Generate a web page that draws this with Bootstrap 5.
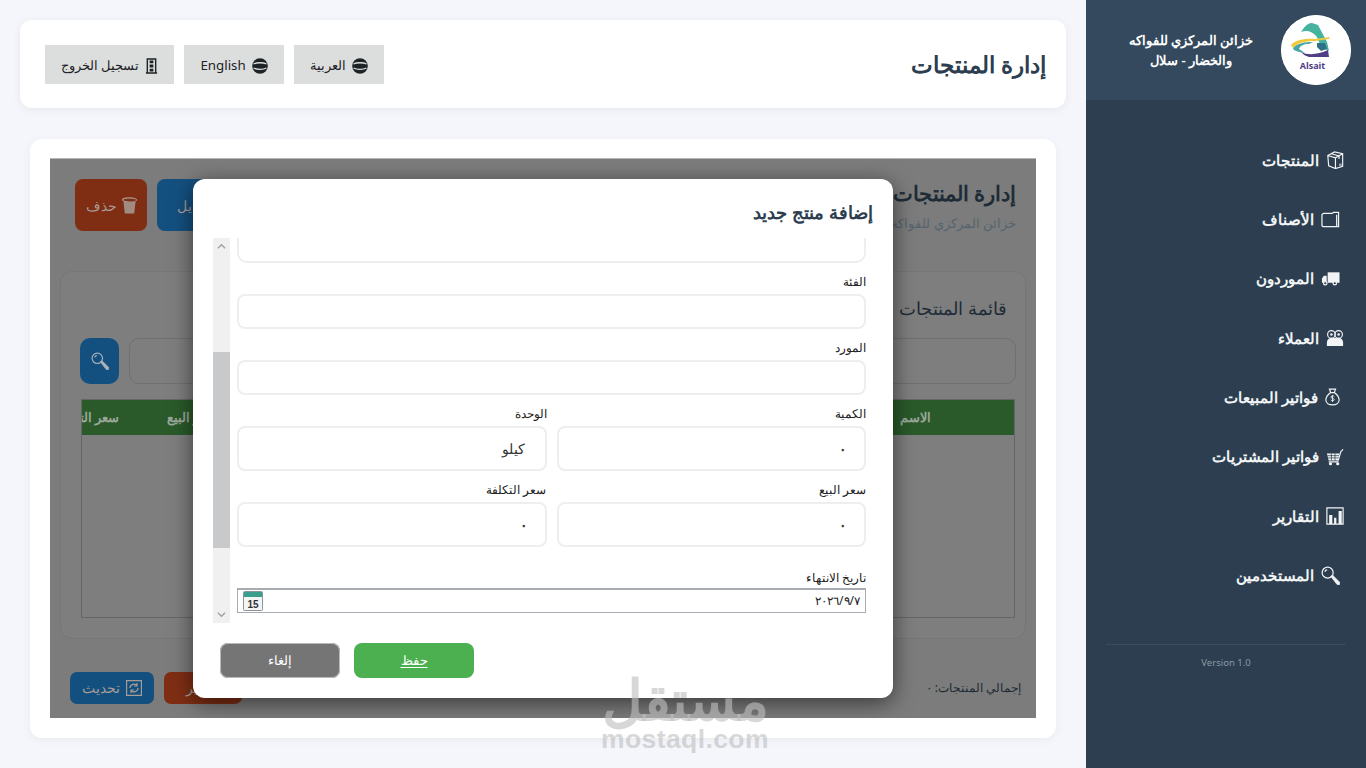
<!DOCTYPE html>
<html lang="ar" dir="rtl">
<head>
<meta charset="utf-8">
<title>إدارة المنتجات</title>
<link href="https://cdn.jsdelivr.net/npm/bootstrap@5.3.0/dist/css/bootstrap.min.css" rel="stylesheet">
<style>
html,body{height:768px;overflow:hidden}
body{font-family:"Noto Sans","Open Sans","Noto Sans CJK SC",sans-serif;background:#f4f6fb;color:#2c3e50;width:1366px}
.ic{display:block;flex:none;fill:none;stroke:currentColor;stroke-width:1.3}
.side{width:280px;height:768px;background:#2c3e50;color:#fff;flex:none}
.side-head{height:100px;background:#34495e;padding:0 15px;gap:15px}
.logo-disc{width:70px;height:70px;border-radius:50%;background:#fff;flex:none;display:block}
.side-name{width:150px;font-size:13px;font-weight:600;line-height:20px;text-align:center}
.side-nav{padding-top:30.5px;height:544px}
.side-link{height:59.3px;padding-right:22px;gap:7px;color:#f2f4f5;font-size:15.2px;font-weight:600;text-decoration:none}
.side-link.narrow{padding-right:26px}
.side-foot{margin:0 20px;border-top:1px solid #3a4c5e;padding-top:11px;font-size:9.5px;color:#8c99a4;text-align:center}
.main-col{width:1086px;height:768px;padding:20px;flex:none;position:relative}
.top-bar{height:88px;background:#fff;border-radius:12px;box-shadow:0 2px 10px rgba(0,0,0,.06);padding:0 20px 0 25px;margin-bottom:31px}
.page-title{font-size:23px;font-weight:600;margin:0;padding-top:2px;color:#2c3e50}
.top-actions{gap:10px}
.top-btn{height:39px;padding:3px 16px 0;background:#dcdedd;color:#1c2226;font-size:13.3px;border-radius:0;border:0;gap:6px}
.content-box{height:599px;margin:0 10px;background:#fff;border-radius:12px;box-shadow:0 2px 10px rgba(0,0,0,.05);padding:19px 20px 20px}
.shot{height:560px;background:#7b7c7b;position:relative;overflow:hidden;border-top:1px solid #b5b6b5;color:#21303d}
.shot-head{height:92px;padding:20px 20px 0 25px}
.shot-h1{font-size:20.5px;font-weight:600;margin:0;color:#1f2c38;line-height:28px}
.shot-sub{font-size:13px;color:#56646f;margin-top:7px}
.act-row{gap:10px}
.act-btn{height:52px;width:72px;border-radius:8px;color:#a79c96;font-size:14px;border:0;gap:5px;padding:0}
.tone-red{background:#7f2e14}
.tone-blue{background:#14507f}
.tone-green{background:#2a5a2a}
.shot-card{height:368px;margin:20px 10px 0;padding:25px 9px 0 19px;border:1px solid #757675;border-radius:12px;background:#7d7e7d}
.shot-h2{font-size:18px;font-weight:500;color:#1f2c38;margin:0 0 19px;padding-right:9px;line-height:22px;height:22px}
.search-row{gap:10px;margin:0 0 15px;height:46px}
.search-field{flex:1;border:1px solid #6f706f;border-radius:10px}
.search-btn{width:39px;height:46px;border-radius:10px;background:#14507f;color:#a9b4bc;border:0;padding:0}
.grid-frame{height:219px;border:1px solid #656665;margin:0 1px}
.grid-head{height:35px;color:#9ba79b;font-size:13px;font-weight:700;overflow:hidden;white-space:nowrap}
.g-name{width:198px;text-align:center}
.g-fill{flex:1}
.g-sale{width:85px;padding-right:35px}
.g-cost{width:85px;padding-right:48px}
.shot-foot{height:56px;padding:0 15px 0 20px;margin-top:21px}
.foot-total{font-size:12px;color:#1d2a35}
.foot-row{gap:10px}
.foot-btn{height:32px;border-radius:7px;color:#a79c96;font-size:13.500px;border:0;padding:0;gap:6px}
.w-upd{width:84px}.w-exp{width:78px}
.modal-sheet{position:absolute;left:143px;top:20px;width:700px;height:519px;background:#fff;border-radius:12px;box-shadow:0 5px 22px rgba(0,0,0,.55);padding:0 27px 0 20px}
.sheet-title{font-size:18.400px;font-weight:600;color:#2c3e50;margin:0 -7px 0 0;height:59px;padding-top:22px;line-height:22px}
.sheet-body{height:385px;overflow:hidden;gap:7px}
.form-col{width:629px}
.clip-input{height:25px;border:2px solid #eeeeee;border-top:0;border-radius:0 0 10px 10px}
.fld-label{font-size:12px;font-weight:500;line-height:15px;color:#222;margin-top:11px;height:20px;display:block}
.fld{height:35px;border:2px solid #eeeeee;border-radius:8px}
.fld-tall{height:45px;border:2px solid #eeeeee;border-radius:8px;padding:0 20px;font-size:14px;color:#333;line-height:41px}
.fld-tall.zero-val{padding-right:17px;font-weight:700}
.pair{gap:10px}
.pair>div{width:309.5px}
.pair .fld-label{margin-top:11px;height:20px}
.fld-label.date-label{margin-top:23px;height:18px}
.date-box{height:25px;border:1px solid #a6acb2;border-top-width:2px;background:#fff;font-size:12px;color:#222;padding:0 5px;position:relative;gap:0}
.scroll-rail{width:17px;background:#f0f0f1;flex:none;position:relative}
.scroll-thumb{position:absolute;left:0;right:0;top:114px;height:196px;background:#c8c9ca}
.rail-arrow{position:absolute;left:4px;width:9px;height:9px;color:#a0a1a2}
.sheet-actions{gap:14px;margin:20px 0 0 7px}
.sheet-btn{width:120px;height:35px;border-radius:8px;border:0;padding:0;color:#fff;font-size:13px}
.b-save{background:#4caf50;text-decoration:underline;text-underline-offset:2px}
.b-cancel{background:#757575;box-shadow:0 0 0 1px #b9b9b9 inset}
.wm{position:absolute;left:590px;top:670px;width:190px;text-align:center;color:rgba(190,190,190,.62);pointer-events:none;line-height:1}
.wm-ar{font-size:56px;font-weight:700;line-height:56px;height:56px}
.wm-en{font-size:26.500px;font-weight:700;font-family:"Liberation Sans",sans-serif;letter-spacing:.4px}
</style>
</head>
<body>
<svg width="0" height="0" class="position-absolute">
<defs>
<symbol id="i-box" viewBox="0 0 20 20"><path d="M2 5L9.500 1 18.500 3V17L10.500 19.500 3 16.500zM2 5l8.500 2.500L18.500 3M10.500 7.500V19.500M6 3l8.500 2.500V9"/><path d="M14.500 14h3v2.500h-3z" fill="currentColor" stroke="none" opacity=".6"/></symbol>
<symbol id="i-folder" viewBox="0 0 20 20"><path d="M1 5l1.500-1.500H12l1-1h5.500V17.500H2L1 16.500zM16.500 5V17.500"/></symbol>
<symbol id="i-truck" viewBox="0 0 20 20"><path d="M7 3.500h12.500v11H7z" fill="currentColor" stroke="none"/><path d="M6 7H3L1 10v4.500h5z" fill="currentColor" stroke="none"/><circle cx="4.500" cy="15" r="1.800" fill="#2c3e50" stroke="currentColor"/><circle cx="14.500" cy="15" r="1.800" fill="#2c3e50" stroke="currentColor"/></symbol>
<symbol id="i-people" viewBox="0 0 20 20"><circle cx="6" cy="6" r="4.200"/><circle cx="14" cy="6" r="4.200"/><path d="M1 19v-4c0-3 2-5 5-5h8c3 0 5 2 5 5v4z" fill="currentColor" stroke="none"/><circle cx="6" cy="6" r="1.400" fill="currentColor" stroke="none"/><circle cx="14" cy="6" r="1.400" fill="currentColor" stroke="none"/></symbol>
<symbol id="i-bag" viewBox="0 0 17 20"><path d="M5 1h7l-1.500 4h-4zM6.500 5C3 7.500 1 10.500 1 13.500 1 17 4.500 19 8.500 19s7.500-2 7.500-5.500c0-3-2-6-5.500-8.500"/><path d="M10.500 9.500c-.5-1-3.500-1.200-3.800.4-.3 1.900 3.900 1.300 3.800 3.200-.1 1.500-3.400 1.400-4 .2M8.500 8v7.500" stroke-width="1"/></symbol>
<symbol id="i-cart" viewBox="0 0 20 20"><path d="M1 6h14l-1.500 8H3z" fill="currentColor" stroke="none"/><path d="M13.500 14l3-10 2.500-2.500M3 15.500h11"/><circle cx="5" cy="17.500" r="1.800" fill="currentColor" stroke="none"/><circle cx="13" cy="17.500" r="1.800" fill="currentColor" stroke="none"/><path d="M1.500 8.500h13M2 11h12M6 6v8M10 6v8" stroke="#2c3e50" stroke-width=".8"/></symbol>
<symbol id="i-chart" viewBox="0 0 20 20"><path d="M1 1h18v18H1z"/><path d="M3.500 9H7v10H3.500zM9 12h2.500v7H9zM14 4.500h3.500V19H14z" fill="currentColor" stroke="none"/></symbol>
<symbol id="i-key" viewBox="0 0 20 20"><circle cx="7" cy="7" r="5.800"/><path d="M10.500 11l1.500-1.500 7.500 7.500v2.500H17z" fill="currentColor" stroke-width=".8"/><path d="M4 6c.5-1.500 1.500-2 2.500-2"/></symbol>
<symbol id="i-globe" viewBox="0 0 16 16"><circle cx="8" cy="8" r="7.800" fill="currentColor" stroke="none"/><path d="M1.500 6C4.500 4.300 11.500 4.300 14.500 6M1.500 10c3 1.700 10 1.700 13 0" stroke="#dcdedd" stroke-width="1.300"/></symbol>
<symbol id="i-door" viewBox="0 0 14 16"><path d="M1 15.500h12M2.500 15.500V.500h9v15" stroke-width="1.500"/><path d="M5 2h4v3H5zM5 6.500h4v3H5zM5 11h4v3H5z" fill="currentColor" stroke="none"/></symbol>
<symbol id="i-trash" viewBox="0 0 16 18"><ellipse cx="8" cy="3" rx="7.500" ry="2.200" fill="none" stroke-width="1.200"/><path d="M1.500 4.500l1.500 13h10l1.500-13c-4 1.500-9 1.500-13 0z" fill="currentColor" stroke="none" opacity=".85"/></symbol>
<symbol id="i-refresh" viewBox="0 0 16 16"><path d="M.500.500h15v15H.500z"/><path d="M4 8a4 4 0 0 1 7-2.500M12 8a4 4 0 0 1-7 2.500M11 3v3H8M5 13v-3h3" stroke-width="1.200"/></symbol>
</defs>
</svg>
<div class="d-flex">
  <aside class="side">
    <div class="side-head d-flex align-items-center">
      <svg class="logo-disc" viewBox="0 0 70 70" role="img" aria-label="Alsait">
        <circle cx="35" cy="35" r="35" fill="#fff"/>
        <path d="M20 17C24 11 27 8 31 8l6 2 9 17 2 9-8-4-4-10C31 16 26 15 20 17z" fill="#46b3a0"/>
        <path d="M12 33C16 28 24 27 32 27l-4 2c-6 0-9 2-10 5l6 4-6-1c-3-1-6-2-6-4z" fill="#4aa5a5"/>
        <path d="M10 30C14 25 24 23 34 24l15-2-1 2-14 2C24 26 16 28 12 33z" fill="#f1c93c"/>
        <path d="M36 28h8l2 6-6 2-4-4z" fill="#2f6f88"/>
        <path d="M20 37C28 41 38 39 47 35l1 7H28c-4-1-6-3-8-5z" fill="#4f3d86"/>
        <text x="31.500" y="54" font-size="9" font-weight="700" text-anchor="middle" fill="#4f3d86" font-family="'Open Sans',sans-serif" direction="ltr">Alsait</text>
      </svg>
      <div class="side-name">خزائن المركزي للفواكه والخضار - سلال</div>
    </div>
    <nav class="side-nav d-flex flex-column">
      <a class="side-link d-flex align-items-center" href="#"><svg class="ic" width="18" height="18"><use href="#i-box"/></svg>المنتجات</a>
      <a class="side-link narrow d-flex align-items-center" href="#"><svg class="ic" width="19" height="19"><use href="#i-folder"/></svg>الأصناف</a>
      <a class="side-link narrow d-flex align-items-center" href="#"><svg class="ic" width="19" height="19"><use href="#i-truck"/></svg>الموردون</a>
      <a class="side-link d-flex align-items-center" href="#"><svg class="ic" width="18" height="18"><use href="#i-people"/></svg>العملاء</a>
      <a class="side-link narrow d-flex align-items-center" href="#"><svg class="ic" width="15" height="18"><use href="#i-bag"/></svg>فواتير المبيعات</a>
      <a class="side-link d-flex align-items-center" href="#"><svg class="ic" width="18" height="18"><use href="#i-cart"/></svg>فواتير المشتريات</a>
      <a class="side-link d-flex align-items-center" href="#"><svg class="ic" width="18" height="18"><use href="#i-chart"/></svg>التقارير</a>
      <a class="side-link narrow d-flex align-items-center" href="#"><svg class="ic" width="19" height="19"><use href="#i-key"/></svg>المستخدمين</a>
    </nav>
    <div class="side-foot"><span dir="ltr">Version 1.0</span></div>
  </aside>
  <main class="main-col">
    <header class="top-bar d-flex align-items-center justify-content-between">
      <h1 class="page-title">إدارة المنتجات</h1>
      <div class="d-flex top-actions">
        <button class="btn top-btn d-flex align-items-center" type="button"><svg class="ic" width="16" height="16"><use href="#i-globe"/></svg>العربية</button>
        <button class="btn top-btn d-flex align-items-center" type="button"><svg class="ic" width="16" height="16"><use href="#i-globe"/></svg>English</button>
        <button class="btn top-btn d-flex align-items-center" type="button"><svg class="ic" width="13" height="16"><use href="#i-door"/></svg>تسجيل الخروج</button>
      </div>
    </header>
    <section class="content-box">
      <div class="shot">
        <div class="shot-head d-flex justify-content-between">
          <div><h2 class="shot-h1">إدارة المنتجات</h2><div class="shot-sub">خزائن المركزي للفواكه والخضار</div></div>
          <div class="d-flex act-row">
            <button class="btn act-btn tone-blue d-flex align-items-center justify-content-center" type="button">تعديل</button>
            <button class="btn act-btn tone-red d-flex align-items-center justify-content-center" type="button"><svg class="ic" width="15" height="17"><use href="#i-trash"/></svg>حذف</button>
          </div>
        </div>
        <div class="shot-card">
          <h3 class="shot-h2">قائمة المنتجات</h3>
          <div class="search-row d-flex">
            <div class="search-field"></div>
            <button class="btn search-btn d-flex align-items-center justify-content-center" type="button" aria-label="بحث"><svg class="ic" width="18" height="18"><use href="#i-key"/></svg></button>
          </div>
          <div class="grid-frame">
            <div class="grid-head tone-green d-flex align-items-center">
              <div class="g-name">الاسم</div><div class="g-fill"></div><div class="g-sale">سعر البيع</div><div class="g-cost">سعر التكلفة</div>
            </div>
          </div>
        </div>
        <div class="shot-foot d-flex align-items-center justify-content-between">
          <div class="foot-total">إجمالي المنتجات: ٠</div>
          <div class="d-flex foot-row">
            <button class="btn foot-btn w-exp tone-red d-flex align-items-center justify-content-center" type="button">تصدير</button>
            <button class="btn foot-btn w-upd tone-blue d-flex align-items-center justify-content-center" type="button"><svg class="ic" width="16" height="16"><use href="#i-refresh"/></svg>تحديث</button>
          </div>
        </div>
        <div class="modal-sheet">
          <h2 class="sheet-title">إضافة منتج جديد</h2>
          <div class="sheet-body d-flex">
            <div class="form-col">
              <div class="clip-input"></div>
              <label class="fld-label">الفئة</label>
              <div class="fld"></div>
              <label class="fld-label">المورد</label>
              <div class="fld"></div>
              <div class="pair d-flex">
                <div><label class="fld-label">الكمية</label><div class="fld-tall zero-val">٠</div></div>
                <div><label class="fld-label">الوحدة</label><div class="fld-tall">كيلو</div></div>
              </div>
              <div class="pair d-flex">
                <div><label class="fld-label">سعر البيع</label><div class="fld-tall zero-val">٠</div></div>
                <div><label class="fld-label">سعر التكلفة</label><div class="fld-tall zero-val">٠</div></div>
              </div>
              <label class="fld-label date-label">تاريخ الانتهاء</label>
              <div class="date-box d-flex align-items-center justify-content-between">
                <span>٢٠٢٦/٩/٧</span>
                <svg width="20" height="20" viewBox="0 0 20 20"><rect x=".5" y=".5" width="19" height="19" rx="1" fill="#f4f5f5" stroke="#8d9399"/><rect x="1" y="1" width="18" height="5" fill="#3b9d8e"/><text x="10" y="16.500" font-size="10" font-weight="700" text-anchor="middle" fill="#333" font-family="'Liberation Sans',sans-serif">15</text></svg>
              </div>
            </div>
            <div class="scroll-rail">
              <svg class="rail-arrow top-0 mt-1" viewBox="0 0 10 10"><path d="M1 7l4-4 4 4" fill="none" stroke="currentColor" stroke-width="1.500"/></svg>
              <div class="scroll-thumb"></div>
              <svg class="rail-arrow bottom-0 mb-1" viewBox="0 0 10 10"><path d="M1 3l4 4 4-4" fill="none" stroke="currentColor" stroke-width="1.500"/></svg>
            </div>
          </div>
          <div class="sheet-actions d-flex justify-content-end">
            <button class="btn sheet-btn b-save" type="button">حفظ</button>
            <button class="btn sheet-btn b-cancel" type="button">إلغاء</button>
          </div>
        </div>
      </div>
    </section>
  </main>
</div>
<div class="wm"><div class="wm-ar">مستقل</div><div class="wm-en">mostaql.com</div></div>
</body>
</html>
